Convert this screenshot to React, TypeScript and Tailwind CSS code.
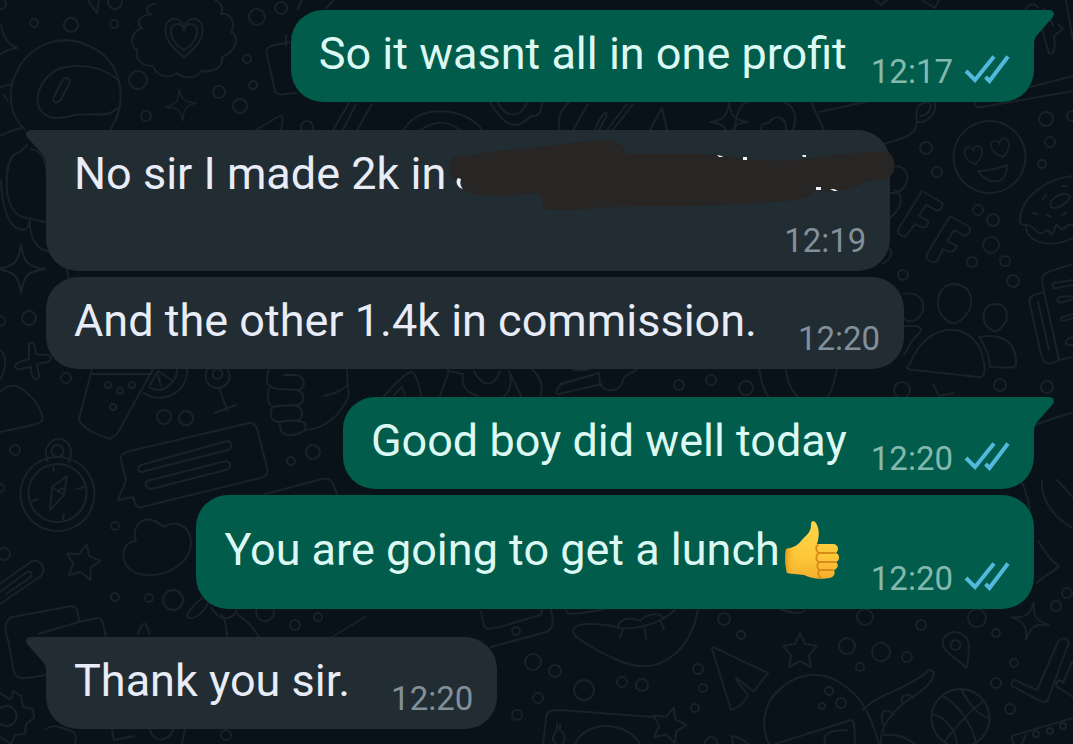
import type { ReactNode } from "react";

const star4 = "M0 -21C2 -6 6 -2 21 0C6 2 2 6 0 21C-2 6 -6 2 -21 0C-6 -2 -2 -6 0 -21Z";
const star5 = "M0 -17L5 -6L17 -4L9 5L11 17L0 11L-11 17L-9 5L-17 -4L-5 -6Z";
const heart = "M0 10C-16 -1 -11 -13 -4 -11C-1 -10 0 -7 0 -6C0 -7 1 -10 4 -11C11 -13 16 -1 0 10Z";

const dots: [number, number, number][] = [
  [34, 23, 4], [71, 25, 7], [114, 24, 4], [115, 2, 7], [1, 4, 5], [138, 80, 9], [146, 116, 5],
  [247, 59, 4], [219, 92, 6], [240, 106, 7], [253, 85, 4], [257, 17, 8], [281, 8, 6], [307, 127, 6],
  [926, 148, 6], [937, 172, 5], [1046, 119, 7], [1050, 142, 5], [1042, 164, 4], [1072, 116, 5],
  [978, 210, 5], [993, 220, 6], [991, 245, 8], [972, 262, 5], [1005, 261, 5], [1013, 281, 6], [903, 275, 5],
  [29, 318, 7], [0, 321, 5], [66, 378, 5], [108, 385, 3], [120, 391, 3], [132, 385, 3], [113, 407, 3],
  [164, 417, 7], [186, 418, 7], [15, 450, 5], [0, 488, 4], [115, 526, 4], [4, 554, 6], [115, 597, 4],
  [149, 598, 4], [173, 600, 10], [295, 625, 5], [318, 617, 4], [265, 612, 9], [313, 452, 7], [291, 461, 4],
  [679, 385, 5], [711, 380, 5], [746, 388, 7], [902, 390, 8], [1000, 385, 6], [1047, 387, 6],
  [1056, 606, 5], [1067, 593, 5], [533, 662, 8], [555, 671, 6], [584, 690, 10], [622, 682, 5], [642, 685, 6],
  [538, 698, 5], [517, 715, 5], [516, 631, 4], [724, 619, 6], [741, 635, 4], [698, 669, 5], [703, 688, 4], [695, 708, 4],
  [711, 743, 6], [865, 617, 8], [921, 625, 5], [977, 618, 9], [996, 633, 4], [847, 646, 8], [881, 652, 9],
  [907, 657, 5], [860, 667, 4], [1014, 663, 4], [996, 683, 5], [1010, 709, 5], [829, 691, 4], [841, 703, 5],
  [822, 706, 3], [1036, 734, 3], [1050, 731, 3], [1063, 726, 3], [226, 735, 5],
];

const lines: string[] = [
  // astronaut helmet
  "M25 130C8 114 7 89 17 71C31 43 64 32 91 47C118 59 127 91 116 119L110 130",
  "M118 80C101 65 78 64 61 68C43 75 34 94 39 107C45 121 59 119 75 115C92 112 108 119 117 108",
  "M54 97L62 81C66 76 72 78 69 84L61 99C57 105 51 102 54 97Z",
  "M0 87L13 84M3 94L8 101M0 136C8 132 16 129 24 127",
  "M88 0C91 5 94 10 97 13L99 0M1 25C3 34 5 43 17 48C9 49 4 51 0 55",
  // scalloped badge
  "M155 4C145 5 145 12 151 14C138 16 136 24 142 28C130 32 130 47 137 50C135 59 141 66 153 66C157 77 169 79 177 73C183 79 198 79 201 71C212 73 224 68 222 57C235 52 241 38 231 32C237 22 229 12 221 14C225 4 217 1 215 0",
  // suitcase and bags
  "M289 42L271 46C266 48 266 51 267 55L275 91C277 95 280 95 285 94L296 93M286 35V45",
  "M256 130L276 118C283 113 284 117 281 130M333 130L349 103M343 130L356 104M357 130L372 104",
  "M298 9L302 0M326 8L334 0",
  "M404 130C417 103 467 107 482 130M420 130C437 120 448 121 460 130",
  "M490 102C505 129 518 130 531 116C541 117 542 107 542 103M498 102C505 119 522 118 527 102",
  "M569 102C559 111 557 122 560 130M573 130L588 104M595 130C599 117 609 107 606 117L599 130M607 130L627 104M613 130L633 104M650 130L662 108L667 130M735 130C736 110 742 102 749 102M784 102C796 106 797 119 793 130M761 130C760 120 770 126 771 120C776 115 787 117 786 130",
  "M811 102L824 130M819 112L870 101",
  // cup
  "M880 145C903 139 917 135 917 122C929 123 937 112 935 102M917 122C915 109 918 102 929 102C933 107 928 116 920 116",
  "M975 103C975 107 977 108 982 107L1073 91M1030 87L1073 76",
  "M1026 9C1028 3 1036 3 1038 8M1044 8L1053 25M1042 30L1049 53C1053 56 1056 50 1054 36L1063 29L1058 24M1066 0L1073 40M875 0L881 5L887 0M922 0L935 8L939 0",
  // grinning face
  "M990 121A36 36 0 1 1 989 121Z",
  "M978 171C987 171 1000 168 1007 165C1007 187 987 185 978 171Z",
  // OFF lettering
  "M922 191L941 202C945 205 940 212 936 210L926 205L919 216L928 221C929 228 923 229 915 224L906 236C901 237 896 233 899 228Z",
  "M950 216L968 226C973 229 967 238 963 235L954 230L947 241L957 246C954 253 949 253 943 249L937 261C931 264 924 259 927 254Z",
  "M889 170C900 161 911 171 906 184C900 195 893 193 890 193M894 190C905 194 902 208 890 218M889 248C894 253 890 260 882 264",
  // doughnut
  "M1073 176C1050 178 1023 194 1020 218C1019 226 1024 225 1027 225C1033 225 1037 234 1041 233C1047 233 1046 226 1051 234C1056 234 1053 226 1057 225C1066 236 1063 222 1073 225M1026 227C1028 243 1051 249 1073 238",
  "M1051 207C1048 199 1062 191 1069 195C1073 200 1057 211 1051 207ZM1043 199L1046 195M1033 213L1038 214M1047 215L1051 217M1062 215L1066 213M1062 186L1067 186",
  // people
  "M954 284C972 285 976 304 965 316C957 326 951 325 943 317C933 305 938 284 954 284ZM994 304C1008 303 1011 318 1001 328C995 334 991 331 986 325C980 315 986 304 994 304Z",
  "M910 364C904 369 910 370 914 370L979 377C985 378 985 371 984 363C978 319 927 318 910 364ZM979 337C1000 333 1016 340 1016 363C1016 370 1011 367 990 367C990 357 986 347 979 337Z",
  "M904 294C921 290 929 307 919 317C913 323 908 323 902 317M904 326L917 326C925 330 921 330 912 341L904 355",
  // notebooks
  "M1073 264L1048 272C1041 274 1042 281 1043 287L1059 360L1073 357M1043 292L1032 296C1028 298 1030 304 1031 309L1041 354C1044 365 1049 366 1059 360M1038 302L1049 350",
  "M1073 280L1054 283C1051 284 1053 289 1056 288L1073 285M1073 296L1060 297C1055 299 1057 304 1063 302L1073 299M1073 314L1062 317C1060 320 1062 322 1066 320L1073 318M1073 337C1065 339 1062 346 1073 345",
  // headphones
  "M27 145L20 152C7 154 6 176 7 191C8 205 16 218 28 218L45 222M31 149C45 152 45 162 47 173M1 180C2 209 9 230 24 230C28 229 29 224 30 220M30 220C29 233 35 250 48 251M64 265C69 269 68 276 68 280",
  // plus sign
  "M29 344C35 340 35 347 36 354C42 356 50 352 51 359C48 365 42 361 37 364L39 376C36 383 31 378 31 367C22 368 16 372 15 366C17 360 28 361 29 359Z",
  "M0 350C8 356 6 371 0 379M0 392C8 385 14 383 22 389C34 398 40 405 43 420C41 423 35 425 0 432",
  // drink and slice
  "M92 369L79 419C81 428 99 436 110 439L117 434L153 369M92 374L152 374M144 393C159 405 188 394 187 370M149 387C162 396 177 382 177 370M157 372L150 385M157 372L161 386M158 371L173 381",
  "M218 364A12 12 0 1 1 217 364M218 369A5 5 0 1 1 217 369M220 390L227 410M215 413L236 405",
  // fist
  "M269 370C263 384 270 388 278 389L298 390C308 387 304 376 296 375L284 375M269 389C266 401 269 409 278 406L298 405C308 401 302 389 296 390M272 408C267 420 276 424 285 421L298 420C306 416 301 406 295 406M280 424C279 435 289 439 304 431C309 423 302 420 293 421M305 430C324 429 341 416 349 395C349 390 347 386 347 370M324 396C334 394 344 389 347 385",
  // compass
  "M48 462C41 446 53 439 59 439C68 439 74 449 69 462M58 457A37 37 0 1 1 57 457ZM58 464A29 29 0 1 1 57 464ZM58 445A6 6 0 1 1 57 445",
  "M67 476L52 487L50 510L64 495ZM52 487L64 495M58 492C61 487 65 487 64 492M53 467L54 471M77 489L84 487M64 514L63 519M31 502L38 499",
  // speech bubble
  "M121 460C120 454 124 453 130 451L245 424C254 421 256 426 258 432L267 468C269 475 265 476 260 478L142 507C137 509 135 504 133 497L118 500L126 480Z",
  "M141 465L227 441C234 443 232 448 228 450L145 471C138 475 136 467 141 465ZM147 481L226 461C233 463 230 469 226 470L151 489C146 489 144 483 147 481Z",
  "M265 494L322 479C330 477 332 480 337 494",
  // cloud
  "M136 541C130 526 145 513 158 523C164 525 163 528 165 526C190 515 202 549 178 566C160 579 130 579 124 560C121 547 129 541 136 541Z",
  // card, pen, gear
  "M8 640C3 625 6 620 12 617L72 606C78 606 78 615 79 622M79 622L38 634M79 622L97 618C104 618 103 627 106 637M8 640L14 672C16 681 27 678 45 675M0 584L29 563C38 556 48 567 41 576L0 604M0 592L27 572C34 570 32 577 28 579L6 594",
  "M0 693L9 699C13 698 13 692 13 691L21 696L23 707L33 709L34 718L26 724L25 734L15 735L11 744L0 737M7 706A10 10 0 1 1 6 706M138 634C144 617 147 624 149 634M46 729C55 723 61 728 72 731C77 734 76 739 75 744",
  "M112 730L114 740L134 736M150 730C154 743 168 742 173 730M185 729L182 744",
  "M202 598C188 610 185 616 189 618C197 619 205 610 209 602M211 607C220 623 234 621 238 607M221 614C227 622 226 629 227 637M237 614C250 623 254 629 259 637M332 637L365 617",
  // strip between lower bubbles
  "M384 396C394 385 405 373 411 372C416 373 420 386 421 396M394 395L402 387L405 395M440 396L449 371L440 361M449 371L463 374M474 371C484 391 496 384 500 371M463 374C460 390 472 394 478 396M504 396C513 390 511 375 509 371M511 375L521 396M532 369C542 378 543 387 541 396M573 370L588 370M560 384L599 373M559 394C553 395 558 385 565 383L599 373L600 385C608 394 621 391 623 380C624 374 632 374 637 369M559 394L602 384M786 370C788 382 790 389 797 396M759 369C762 384 765 393 768 396M828 396C833 390 835 378 837 369M933 384L939 396L954 393",
  // tablet and lips
  "M481 612L484 626C487 631 491 628 500 627L540 615C543 613 542 610 541 609M491 647L546 632C555 628 553 619 551 609M566 609C566 616 571 614 582 613L606 609",
  "M698 609C691 650 660 678 620 661C602 654 586 644 575 636C569 626 579 624 590 624C603 624 611 625 619 628C639 630 661 623 675 610M618 626C621 617 633 617 640 621C648 612 661 613 664 619M623 629L620 638M645 629L646 639M660 620L664 629",
  // cursor arrow
  "M712 649C711 644 715 649 768 673L754 691C750 690 742 681 736 678C738 685 747 692 748 696C744 702 739 708 731 710Z",
  // photo frame
  "M543 744L546 718C547 710 552 710 561 710L653 717M575 744C587 718 628 722 640 744M556 744C550 739 554 735 557 730V724M560 724V730C566 734 566 740 562 744",
  "M780 609C790 613 800 614 805 611M733 744L732 736C736 736 744 740 748 744M769 744C757 720 770 694 780 690",
  // whale and ball
  "M770 701C787 675 816 668 839 682C861 696 869 710 879 744M863 710C876 694 909 689 929 670C940 671 931 686 912 697C884 716 880 734 881 744M883 724C878 708 889 708 894 715M902 703C900 694 909 693 913 698M884 735C898 734 906 737 915 744M775 744L851 720C856 722 854 733 855 744M825 744C821 730 836 731 847 730",
  "M961 689A29 29 0 1 1 960 689ZM961 689C969 704 978 716 989 718M933 714C949 719 956 733 957 744M942 696C956 702 973 724 976 744M945 741C956 727 971 709 984 701",
  "M966 667C952 656 940 649 943 639C949 628 968 630 969 646C968 658 968 672 964 667ZM956 640A5 5 0 1 1 955 640",
  // check marks
  "M1012 686C1010 681 1014 678 1019 682L1037 690L1057 644C1060 635 1071 638 1068 645L1048 699C1045 706 1041 701 1012 686ZM1073 660L1063 683C1060 678 1056 681 1056 686L1073 697",
  "M1073 718L1015 735C1009 736 1014 744 1014 744M1026 735L1022 744",
  "M1042 480C1040 500 1056 520 1073 528M1057 480L1073 497M1021 480C1026 492 1029 502 1030 511M1038 541C1046 553 1050 560 1059 566C1053 573 1044 575 1037 583M1035 425C1050 420 1063 414 1073 413",
];

function Wallpaper() {
  return (
    <svg
      className="absolute inset-0 -z-10 h-full w-full"
      viewBox="0 0 1073 744"
      preserveAspectRatio="xMidYMid slice"
      fill="none"
      stroke="#192226"
      strokeWidth="2"
      strokeLinecap="round"
      strokeLinejoin="round"
      aria-hidden="true"
    >
      {lines.map((d) => (
        <path key={d} d={d} />
      ))}
      {dots.map(([x, y, r]) => (
        <circle key={`${x}-${y}`} cx={x} cy={y} r={r} />
      ))}
      <path d={heart} transform="translate(184 39) scale(1.75 1.8)" strokeWidth="1.1" />
      <path d={heart} transform="translate(184 38) scale(1.25)" strokeWidth="1.6" />
      <path d={heart} transform="translate(974 156) rotate(-8) scale(.85)" />
      <path d={heart} transform="translate(1001 149) rotate(-14) scale(.85)" />
      <path d={star4} transform="translate(181 105) rotate(-8) scale(.75)" />
      <path d={star4} transform="translate(21 269) scale(1.15)" />
      <path d={star4} transform="translate(729 122) scale(.9)" />
      <path d={star4} transform="translate(1030 621) rotate(12) scale(.9)" />
      <path d={star5} transform="translate(83 561) rotate(12)" />
      <path d={star5} transform="translate(800 650)" />
      <path d={star5} transform="translate(669 724) rotate(16)" />
    </svg>
  );
}

function Tail({ mine }: { mine: boolean }) {
  return (
    <svg
      className={
        mine
          ? "absolute top-0 left-full -ml-5 h-[34px] w-10 text-[#015c4b]"
          : "absolute top-0 right-full -mr-5 h-[34px] w-10 -scale-x-100 text-[#212c33]"
      }
      viewBox="20 0 40 34"
      fill="currentColor"
      aria-hidden="true"
    >
      <path d="M20 0H55C59.500 0 61.500 4 58.500 7.500L44 24C41 27.500 40 30 40 34H20Z" />
    </svg>
  );
}

function ReadTicks() {
  return (
    <svg
      className="mb-1 h-[30px] w-[46px]"
      viewBox="0 0 46 30"
      fill="none"
      stroke="#53b9dc"
      strokeWidth="4"
      role="img"
      aria-label="Read"
    >
      <path d="M2 17L11 26L30 2.500M21.500 23L25.500 27L44 2.500" />
    </svg>
  );
}

function ThumbsUp() {
  return (
    <svg className="mr-[6px] ml-1 h-[60px] w-[57px]" viewBox="0 0 57 60" role="img" aria-label="Thumbs up">
      <defs>
        <linearGradient id="skin" x1="0" y1="0" x2="0" y2="1">
          <stop offset="0" stopColor="#ffd54a" />
          <stop offset=".6" stopColor="#fdc83a" />
          <stop offset="1" stopColor="#f5ae2e" />
        </linearGradient>
        <linearGradient id="wrist" x1="0" y1="0" x2="1" y2="0">
          <stop offset="0" stopColor="#e59a20" />
          <stop offset="1" stopColor="#fdc52f" stopOpacity="0" />
        </linearGradient>
      </defs>
      <path
        d="M2 29C8 28 13 26 17 21C22 15 27 13 27 5C27 0 30 0 32 3C35 8 36 15 33 24H49C55 24 55 31 52 33C56 34 56 41 52 42C55 44 54 49 50 50C52 54 49 58 45 58C37 60 26 58 20 55C13 54 7 54 3 53C1 45 1 37 2 29Z"
        fill="url(#skin)"
      />
      <path d="M2 29L12 27V54L3 53C1 45 1 37 2 29Z" fill="url(#wrist)" />
      <g fill="none" stroke="#d88a1a" strokeWidth="1.800" strokeLinecap="round">
        <path d="M34 25C31 27 32 31 35 33H51M35 33C31 36 32 41 35 42H51M35 42C32 45 33 49 36 50H49M36 50C33 52 34 56 37 58" />
      </g>
    </svg>
  );
}

function Redaction() {
  return (
    <svg className="h-[78px] w-[452px]" viewBox="0 0 452 78" role="img" aria-label="Redacted">
      <path
        d="M7 30C8 24 14 25 24 24C35 22 49 19 63 18C92 16 125 11 157 8C170 8 180 11 184 22C218 22 250 21 277 23C303 29 333 29 353 28C388 23 419 20 443 19C450 22 453 31 451 38C449 46 442 47 429 49C418 49 415 57 403 58C390 59 382 60 371 58C367 66 356 69 342 69C277 75 231 73 179 75C147 75 124 80 104 78C99 74 98 68 97 61C83 62 65 65 48 64C34 64 25 61 20 57C16 46 8 48 6 39Z"
        fill="#282525"
      />
      <g fill="#eef1f8">
        <path d="M15 46C12 49 14 56 20 57C17 54 17 50 18 47Z" />
        <path d="M274 23L279 24L280 25H276ZM300 25H304V28H300ZM359 23H363V25H360ZM373 55H378V58H373ZM387 57L391 57L395 59H391Z" />
      </g>
    </svg>
  );
}

interface BubbleProps {
  time: string;
  mine?: boolean;
  tail?: boolean;
  children: ReactNode;
}

function Bubble({ time, mine = false, tail = false, children }: BubbleProps) {
  const side = mine
    ? "self-end bg-[#015c4b] text-[#dcf8f3] gap-x-6"
    : "self-start bg-[#212c33] text-[#e8ecf6] gap-x-[41px]";
  const corner = tail ? (mine ? "rounded-tr-none" : "rounded-tl-none") : "";
  return (
    <article
      className={`relative flex items-end rounded-[32px] pt-[18px] pr-6 pb-[14px] pl-7 ${side} ${corner}`}
    >
      {tail && <Tail mine={mine} />}
      {children}
      <div className="flex items-end gap-[11px]">
        <time
          className={
            mine ? "text-[33px] leading-8 text-[#83b9ae]" : "text-[33px] leading-8 text-[#82909a]"
          }
        >
          {time}
        </time>
        {mine && <ReadTicks />}
      </div>
    </article>
  );
}

function Message({ children }: { children: ReactNode }) {
  return <p className="relative mb-2 text-[45px] leading-[52px] whitespace-nowrap">{children}</p>;
}

export default function App() {
  return (
    <main className="relative isolate flex min-h-screen flex-col gap-7 overflow-hidden bg-[#091218] pt-[10px] pr-[39px] pb-[15px] pl-[46px] font-['Roboto',sans-serif]">
      <Wallpaper />
      <Bubble mine tail time="12:17">
        <Message>So it wasnt all in one profit</Message>
      </Bubble>
      <section className="flex flex-col gap-[6px]">
        <article className="relative flex flex-col self-start rounded-[32px] rounded-tl-none bg-[#212c33] pt-[18px] pr-6 pb-[14px] pl-7 text-[#e8ecf6]">
          <Tail mine={false} />
          <div className="relative mr-[420px]">
            <p className="text-[45px] leading-[52px] whitespace-nowrap">No sir I made 2k in</p>
            <div className="absolute -top-4 left-full -ml-[3px] w-[452px]">
              <Redaction />
            </div>
          </div>
          <time className="mt-[25px] self-end text-[33px] leading-8 text-[#82909a]">12:19</time>
        </article>
        <Bubble time="12:20">
          <Message>And the other 1.4k in commission.</Message>
        </Bubble>
      </section>
      <section className="flex flex-col gap-[6px]">
        <Bubble mine tail time="12:20">
          <Message>Good boy did well today</Message>
        </Bubble>
        <Bubble mine time="12:20">
          <p className="mb-2 flex items-center text-[45px] leading-[74px] whitespace-nowrap">
            You are going to get a lunch
            <ThumbsUp />
          </p>
        </Bubble>
      </section>
      <Bubble tail time="12:20">
        <Message>Thank you sir.</Message>
      </Bubble>
    </main>
  );
}
